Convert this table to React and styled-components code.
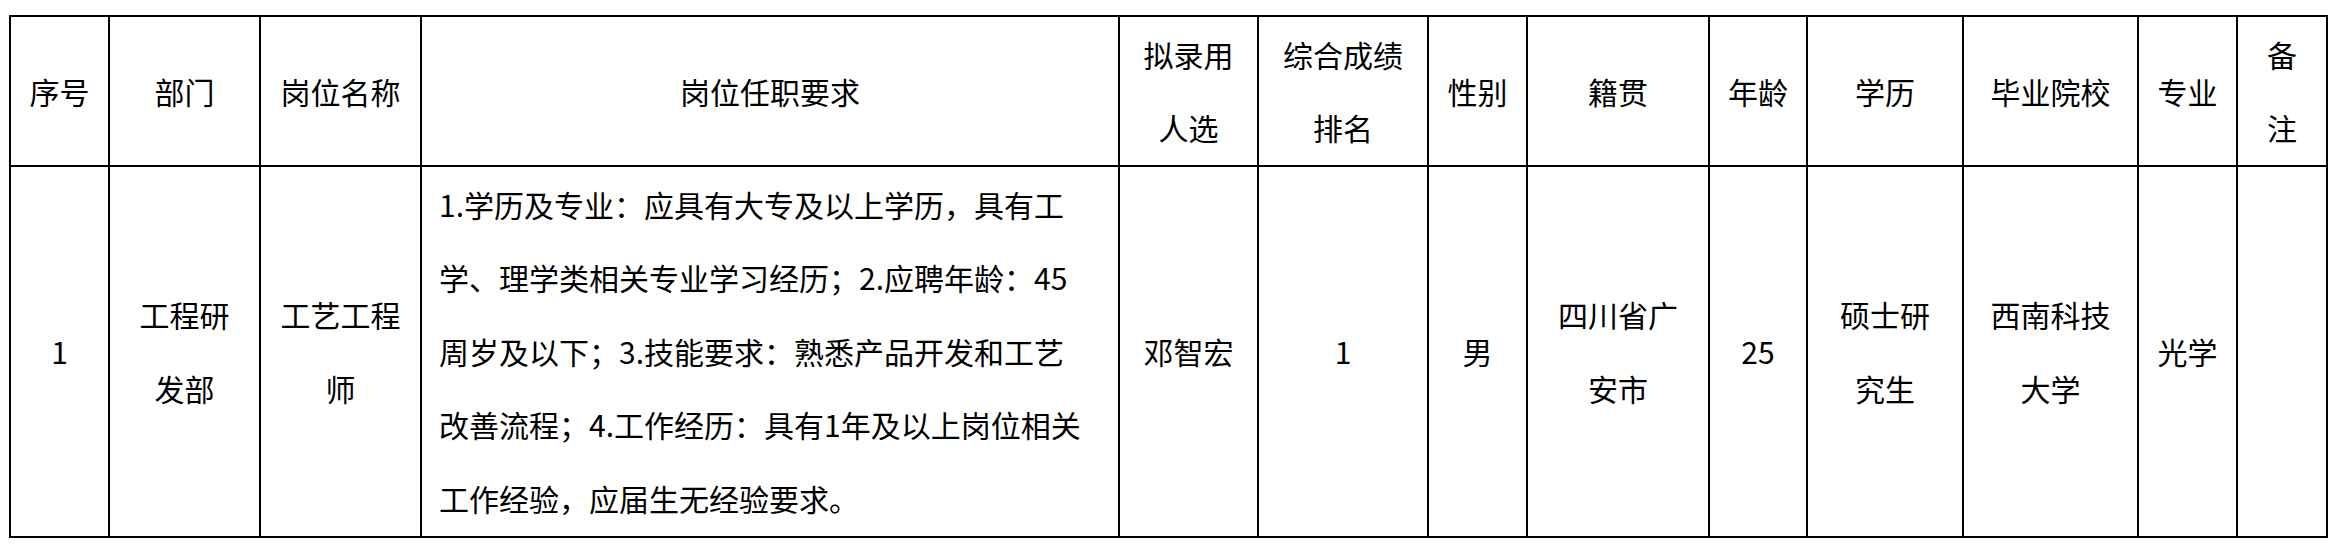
import React from 'react';
import styled, { createGlobalStyle } from 'styled-components';

const GlobalStyle = createGlobalStyle`
    html, body {
        margin: 0;
        padding: 0;
        background: #ffffff;
    }
    body {
        font-family: "Noto Sans CJK SC", "Noto Sans", sans-serif;
        color: #000000;
    }
`;

// column widths are the inside of each cell, the 2px rules come from the grid gap
const columns = [
    { width: 97, head: ['序号'], body: ['1'] },
    { width: 149, head: ['部门'], body: ['工程研', '发部'] },
    { width: 159, head: ['岗位名称'], body: ['工艺工程', '师'] },
    {
        width: 696,
        head: ['岗位任职要求'],
        body: [
            '1.学历及专业：应具有大专及以上学历，具有工',
            '学、理学类相关专业学习经历；2.应聘年龄：45',
            '周岁及以下；3.技能要求：熟悉产品开发和工艺',
            '改善流程；4.工作经历：具有1年及以上岗位相关',
            '工作经验，应届生无经验要求。',
        ],
        left: true,
    },
    { width: 137, head: ['拟录用', '人选'], body: ['邓智宏'] },
    { width: 168, head: ['综合成绩', '排名'], body: ['1'] },
    { width: 97, head: ['性别'], body: ['男'] },
    { width: 180, head: ['籍贯'], body: ['四川省广', '安市'] },
    { width: 96, head: ['年龄'], body: ['25'] },
    { width: 154, head: ['学历'], body: ['硕士研', '究生'] },
    { width: 173, head: ['毕业院校'], body: ['西南科技', '大学'] },
    { width: 97, head: ['专业'], body: ['光学'] },
    { width: 88, head: ['备', '注'], body: [] },
];

const App = () => {
    return (
        <>
            <GlobalStyle />
            <Sheet $cols={columns.map((c) => c.width + 'px').join(' ')}>
                {columns.map((col, i) => (
                    <HeadCell key={'h' + i}>
                        {col.head.map((line, j) => (
                            <Line key={j}>{line}</Line>
                        ))}
                    </HeadCell>
                ))}
                {columns.map((col, i) => (
                    <BodyCell key={'b' + i} $left={col.left}>
                        {col.body.map((line, j) => (
                            <Line key={j}>{line}</Line>
                        ))}
                    </BodyCell>
                ))}
            </Sheet>
        </>
    );
};

const Sheet = styled.div`
    display: grid;
    grid-template-columns: ${(p) => p.$cols};
    grid-template-rows: 148px 369px;
    gap: 2px;
    padding: 2px;
    background: #000000;
    width: max-content;
    margin: 15px 0 0 9px;
`;

const HeadCell = styled.div`
    display: flex;
    flex-direction: column;
    align-items: center;
    justify-content: center;
    background: #ffffff;
    font-size: 30px;
    line-height: 73px;
    text-align: center;
`;

const BodyCell = styled.div`
    display: flex;
    flex-direction: column;
    align-items: ${(p) => (p.$left ? 'flex-start' : 'center')};
    justify-content: center;
    padding-left: ${(p) => (p.$left ? '17px' : '0')};
    background: #ffffff;
    font-size: 30px;
    line-height: 73.6px;
    text-align: ${(p) => (p.$left ? 'left' : 'center')};
`;

const Line = styled.span`
    display: block;
    white-space: nowrap;
`;

export default App;
